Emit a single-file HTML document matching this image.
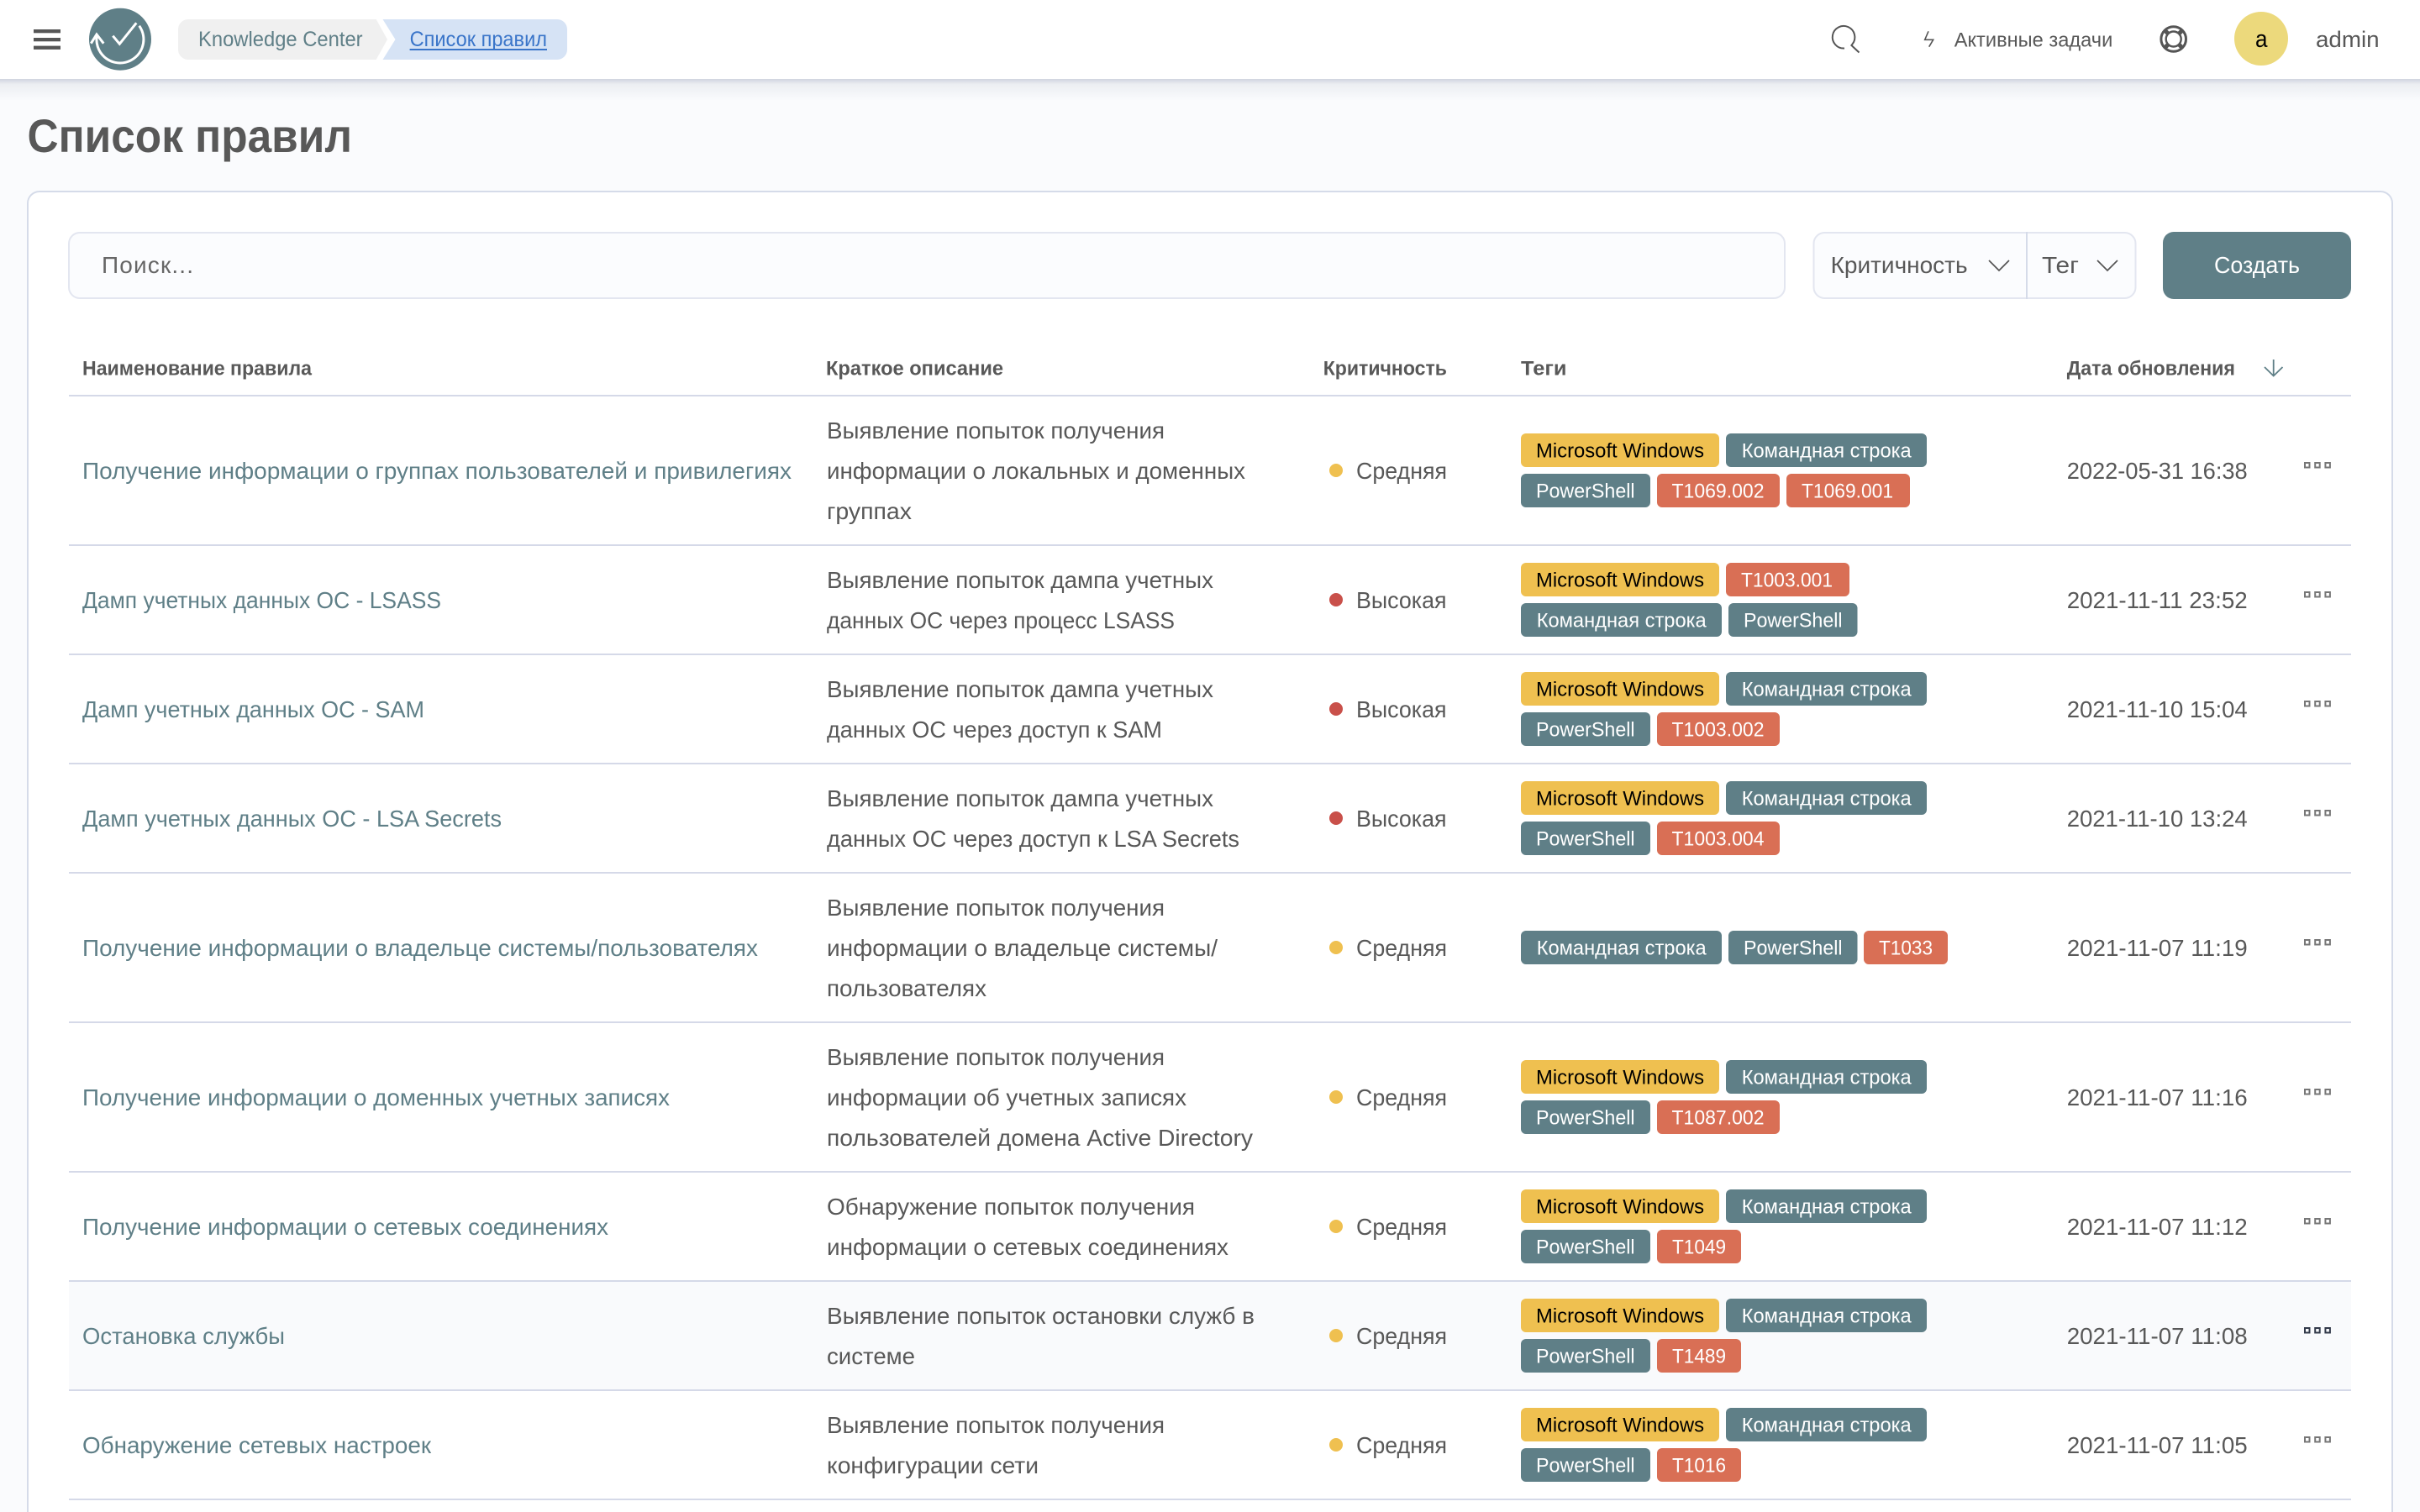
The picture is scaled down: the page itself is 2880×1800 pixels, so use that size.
<!DOCTYPE html>
<html lang="ru"><head><meta charset="utf-8"><title>Список правил</title>
<style>
html,body{margin:0;padding:0;background:#fafbfd;width:2880px;height:1800px;overflow:hidden}
svg{display:block}
text{font-family:"Liberation Sans",sans-serif;fill:#585858;font-size:28px}
.n{fill:#5f7f87}
.h{font-size:24px;font-weight:bold}
.w{fill:#fff;font-size:24px}
.k{fill:#000;font-size:24px}
.y{fill:#efc050}.t{fill:#5f7f87}.r{fill:#d96f55}
.q{fill:none;stroke:#777;stroke-width:2}
.l{fill:none;stroke:#555;stroke-width:1.7}
</style></head><body>
<svg width="2880" height="1800" viewBox="0 0 2880 1800" xmlns="http://www.w3.org/2000/svg">
<defs><linearGradient id="sh" x1="0" y1="0" x2="0" y2="1"><stop offset="0" stop-color="#d0d4e0"/><stop offset=".25" stop-color="#eceef2"/><stop offset="1" stop-color="#fafbfd"/></linearGradient></defs>
<rect width="2880" height="1800" fill="#fafbfd"/>
<rect y="94" width="2880" height="26" fill="url(#sh)"/>
<rect width="2880" height="94" fill="#fff"/>
<!-- hamburger -->
<rect x="40" y="35" width="32" height="4.3" fill="#555"/><rect x="40" y="45" width="32" height="4.3" fill="#555"/><rect x="40" y="54.6" width="32" height="4.3" fill="#555"/>
<!-- logo -->
<circle cx="143" cy="46.7" r="37" fill="#5f7f87"/>
<path d="M165.7 30.7A28 28 0 1 1 115.2 43M108.3 51.7L115 41L123.3 51.7M134.3 42.7L142.3 52.3L162.3 27.3" fill="none" stroke="#fff" stroke-width="3"/>
<!-- breadcrumb -->
<path d="M224 23H447.7L461 47L447.7 71H224A12 12 0 0 1 212 59V35A12 12 0 0 1 224 23Z" fill="#f0f0f0"/>
<path d="M455.5 23H663A12 12 0 0 1 675 35V59A12 12 0 0 1 663 71H455.5L470.5 47Z" fill="#d6e3f5"/>
<text x="236" y="55" style="font-size:25px;fill:#5f7f87" textLength="195.6" lengthAdjust="spacingAndGlyphs">Knowledge Center</text>
<text x="487.6" y="55" style="font-size:25px;fill:#3a75c9" textLength="163.4" lengthAdjust="spacingAndGlyphs">Список правил</text>
<rect x="487.6" y="58" width="163.4" height="2" fill="#3a75c9"/>
<!-- right header -->
<path d="M2195 57.5A13.3 13.3 0 1 1 2204.5 52.5L2203.4 54L2212.5 62.5" fill="none" stroke="#555" stroke-width="2"/>
<path d="M2295 37.3L2290.7 47.3H2300.7L2295.7 55.7" fill="none" stroke="#555" stroke-width="1.6"/>
<text x="2325.7" y="55.5" style="font-size:24px" textLength="188.6" lengthAdjust="spacingAndGlyphs">Активные задачи</text>
<circle cx="2586.7" cy="46.5" r="14.8" fill="none" stroke="#555" stroke-width="3"/><circle cx="2586.7" cy="46.5" r="9" fill="none" stroke="#555" stroke-width="2.4"/>
<path d="M2576.5 36.3L2580.3 40.1M2596.9 36.3L2593.1 40.1M2576.5 56.7L2580.3 52.9M2596.9 56.7L2593.1 52.9" fill="none" stroke="#555" stroke-width="5"/>
<circle cx="2691" cy="46" r="32" fill="#ecd97c"/>
<text x="2684" y="56" style="fill:#000;font-size:29px" textLength="14.5" lengthAdjust="spacingAndGlyphs">a</text>
<text x="2756" y="56" style="font-size:27px" textLength="75.6" lengthAdjust="spacingAndGlyphs">admin</text>
<!-- title -->
<text x="32.5" y="181" style="font-size:56px;font-weight:bold" textLength="386.5" lengthAdjust="spacingAndGlyphs">Список правил</text>
<!-- card -->
<rect x="33" y="228" width="2814" height="1640" rx="14" fill="#fff" stroke="#d5dbe9" stroke-width="2"/>
<!-- toolbar -->
<rect x="82" y="277" width="2042" height="78" rx="13" fill="#fbfcfe" stroke="#e3e6f0" stroke-width="2"/>
<text x="121" y="325" style="fill:#666" textLength="109" lengthAdjust="spacing">Поиск...</text>
<rect x="2158.5" y="277" width="383" height="78" rx="13" fill="#fbfcfe" stroke="#e3e6f0" stroke-width="2"/>
<rect x="2411" y="276" width="2" height="80" fill="#d5dbe9"/>
<text x="2178.6" y="325" textLength="163" lengthAdjust="spacingAndGlyphs">Критичность</text>
<path d="M2367 310L2379 322L2391 310" class="l"/>
<text x="2430" y="325" textLength="44" lengthAdjust="spacingAndGlyphs">Тег</text>
<path d="M2496 310L2508 322L2520 310" class="l"/>
<rect x="2574" y="276" width="224" height="80" rx="13" fill="#5f7f87"/>
<text x="2635" y="325" style="fill:#fff" textLength="102" lengthAdjust="spacingAndGlyphs">Создать</text>
<!-- table head -->
<text class="h" x="98" y="446.7" textLength="273" lengthAdjust="spacingAndGlyphs">Наименование правила</text>
<text class="h" x="983" y="446.7" textLength="211" lengthAdjust="spacingAndGlyphs">Краткое описание</text>
<text class="h" x="1574.7" y="446.7" textLength="147.3" lengthAdjust="spacingAndGlyphs">Критичность</text>
<text class="h" x="1810" y="446.7" textLength="54.5" lengthAdjust="spacingAndGlyphs">Теги</text>
<text class="h" x="2459.7" y="446.7" textLength="200.3" lengthAdjust="spacingAndGlyphs">Дата обновления</text>
<path d="M2705.7 428V447M2695 437L2705.7 447.5L2716.5 437" fill="none" stroke="#5f7f87" stroke-width="1.8"/>
<!-- hover row -->
<rect x="82" y="1525" width="2716" height="130" fill="#f9fafc"/>
<!-- lines -->
<g fill="#d5d9e8"><rect x="82" y="470" width="2716" height="2"/><rect x="82" y="648" width="2716" height="2"/><rect x="82" y="778" width="2716" height="2"/><rect x="82" y="908" width="2716" height="2"/><rect x="82" y="1038" width="2716" height="2"/><rect x="82" y="1216" width="2716" height="2"/><rect x="82" y="1394" width="2716" height="2"/><rect x="82" y="1524" width="2716" height="2"/><rect x="82" y="1654" width="2716" height="2"/><rect x="82" y="1784" width="2716" height="2"/></g>

<!-- row 1 -->
<g transform="translate(0,560)">
<text class="n" x="98" y="10" textLength="844" lengthAdjust="spacingAndGlyphs">Получение информации о группах пользователей и привилегиях</text>
<text x="984" y="-38" textLength="402" lengthAdjust="spacingAndGlyphs">Выявление попыток получения</text>
<text x="984" y="10" textLength="498" lengthAdjust="spacingAndGlyphs">информации о локальных и доменных</text>
<text x="984" y="58" textLength="101" lengthAdjust="spacingAndGlyphs">группах</text>
<circle cx="1590" cy="0" r="8" fill="#efc050"/><text x="1614" y="10" textLength="108" lengthAdjust="spacingAndGlyphs">Средняя</text>
<rect class="y" x="1810" y="-44" width="236" height="40" rx="6"/><text class="k" x="1828" y="-15.3" textLength="200" lengthAdjust="spacingAndGlyphs">Microsoft Windows</text>
<rect class="t" x="2054" y="-44" width="239" height="40" rx="6"/><text class="w" x="2072.7" y="-15.3" textLength="202" lengthAdjust="spacingAndGlyphs">Командная строка</text>
<rect class="t" x="1810" y="4" width="154" height="40" rx="6"/><text class="w" x="1828" y="32.7" textLength="117.6" lengthAdjust="spacingAndGlyphs">PowerShell</text>
<rect class="r" x="1972" y="4" width="146" height="40" rx="6"/><text class="w" x="1989.5" y="32.7" textLength="110" lengthAdjust="spacingAndGlyphs">T1069.002</text>
<rect class="r" x="2126" y="4" width="147" height="40" rx="6"/><text class="w" x="2144" y="32.7" textLength="109" lengthAdjust="spacingAndGlyphs">T1069.001</text>
<text x="2459.7" y="10" textLength="215" lengthAdjust="spacingAndGlyphs">2022-05-31 16:38</text>
<rect class="q" x="2743" y="-9" width="5.5" height="5.5"/><rect class="q" x="2755.2" y="-9" width="5.5" height="5.5"/><rect class="q" x="2767.4" y="-9" width="5.5" height="5.5"/>
</g>

<!-- row 2 -->
<g transform="translate(0,714)">
<text class="n" x="98" y="10" textLength="427" lengthAdjust="spacingAndGlyphs">Дамп учетных данных ОС - LSASS</text>
<text x="984" y="-14" textLength="460" lengthAdjust="spacingAndGlyphs">Выявление попыток дампа учетных</text>
<text x="984" y="34" textLength="414" lengthAdjust="spacingAndGlyphs">данных ОС через процесс LSASS</text>
<circle cx="1590" cy="0" r="8" fill="#c9504a"/><text x="1614" y="10" textLength="107.5" lengthAdjust="spacingAndGlyphs">Высокая</text>
<rect class="y" x="1810" y="-44" width="236" height="40" rx="6"/><text class="k" x="1828" y="-15.3" textLength="200" lengthAdjust="spacingAndGlyphs">Microsoft Windows</text>
<rect class="r" x="2054" y="-44" width="147" height="40" rx="6"/><text class="w" x="2072" y="-15.3" textLength="109" lengthAdjust="spacingAndGlyphs">T1003.001</text>
<rect class="t" x="1810" y="4" width="239" height="40" rx="6"/><text class="w" x="1828.7" y="32.7" textLength="202" lengthAdjust="spacingAndGlyphs">Командная строка</text>
<rect class="t" x="2057" y="4" width="153.5" height="40" rx="6"/><text class="w" x="2075" y="32.7" textLength="117.6" lengthAdjust="spacingAndGlyphs">PowerShell</text>
<text x="2459.7" y="10" textLength="215" lengthAdjust="spacingAndGlyphs">2021-11-11 23:52</text>
<rect class="q" x="2743" y="-9" width="5.5" height="5.5"/><rect class="q" x="2755.2" y="-9" width="5.5" height="5.5"/><rect class="q" x="2767.4" y="-9" width="5.5" height="5.5"/>
</g>

<!-- row 3 -->
<g transform="translate(0,844)">
<text class="n" x="98" y="10" textLength="407" lengthAdjust="spacingAndGlyphs">Дамп учетных данных ОС - SAM</text>
<text x="984" y="-14" textLength="460" lengthAdjust="spacingAndGlyphs">Выявление попыток дампа учетных</text>
<text x="984" y="34" textLength="399" lengthAdjust="spacingAndGlyphs">данных ОС через доступ к SAM</text>
<circle cx="1590" cy="0" r="8" fill="#c9504a"/><text x="1614" y="10" textLength="107.5" lengthAdjust="spacingAndGlyphs">Высокая</text>
<rect class="y" x="1810" y="-44" width="236" height="40" rx="6"/><text class="k" x="1828" y="-15.3" textLength="200" lengthAdjust="spacingAndGlyphs">Microsoft Windows</text>
<rect class="t" x="2054" y="-44" width="239" height="40" rx="6"/><text class="w" x="2072.7" y="-15.3" textLength="202" lengthAdjust="spacingAndGlyphs">Командная строка</text>
<rect class="t" x="1810" y="4" width="154" height="40" rx="6"/><text class="w" x="1828" y="32.7" textLength="117.6" lengthAdjust="spacingAndGlyphs">PowerShell</text>
<rect class="r" x="1972" y="4" width="146" height="40" rx="6"/><text class="w" x="1989.5" y="32.7" textLength="110" lengthAdjust="spacingAndGlyphs">T1003.002</text>
<text x="2459.7" y="10" textLength="215" lengthAdjust="spacingAndGlyphs">2021-11-10 15:04</text>
<rect class="q" x="2743" y="-9" width="5.5" height="5.5"/><rect class="q" x="2755.2" y="-9" width="5.5" height="5.5"/><rect class="q" x="2767.4" y="-9" width="5.5" height="5.5"/>
</g>

<!-- row 4 -->
<g transform="translate(0,974)">
<text class="n" x="98" y="10" textLength="499" lengthAdjust="spacingAndGlyphs">Дамп учетных данных ОС - LSA Secrets</text>
<text x="984" y="-14" textLength="460" lengthAdjust="spacingAndGlyphs">Выявление попыток дампа учетных</text>
<text x="984" y="34" textLength="491" lengthAdjust="spacingAndGlyphs">данных ОС через доступ к LSA Secrets</text>
<circle cx="1590" cy="0" r="8" fill="#c9504a"/><text x="1614" y="10" textLength="107.5" lengthAdjust="spacingAndGlyphs">Высокая</text>
<rect class="y" x="1810" y="-44" width="236" height="40" rx="6"/><text class="k" x="1828" y="-15.3" textLength="200" lengthAdjust="spacingAndGlyphs">Microsoft Windows</text>
<rect class="t" x="2054" y="-44" width="239" height="40" rx="6"/><text class="w" x="2072.7" y="-15.3" textLength="202" lengthAdjust="spacingAndGlyphs">Командная строка</text>
<rect class="t" x="1810" y="4" width="154" height="40" rx="6"/><text class="w" x="1828" y="32.7" textLength="117.6" lengthAdjust="spacingAndGlyphs">PowerShell</text>
<rect class="r" x="1972" y="4" width="146" height="40" rx="6"/><text class="w" x="1989.5" y="32.7" textLength="110" lengthAdjust="spacingAndGlyphs">T1003.004</text>
<text x="2459.7" y="10" textLength="215" lengthAdjust="spacingAndGlyphs">2021-11-10 13:24</text>
<rect class="q" x="2743" y="-9" width="5.5" height="5.5"/><rect class="q" x="2755.2" y="-9" width="5.5" height="5.5"/><rect class="q" x="2767.4" y="-9" width="5.5" height="5.5"/>
</g>

<!-- row 5 -->
<g transform="translate(0,1128)">
<text class="n" x="98" y="10" textLength="804" lengthAdjust="spacingAndGlyphs">Получение информации о владельце системы/пользователях</text>
<text x="984" y="-38" textLength="402" lengthAdjust="spacingAndGlyphs">Выявление попыток получения</text>
<text x="984" y="10" textLength="465" lengthAdjust="spacingAndGlyphs">информации о владельце системы/</text>
<text x="984" y="58" textLength="190" lengthAdjust="spacingAndGlyphs">пользователях</text>
<circle cx="1590" cy="0" r="8" fill="#efc050"/><text x="1614" y="10" textLength="108" lengthAdjust="spacingAndGlyphs">Средняя</text>
<rect class="t" x="1810" y="-20" width="239" height="40" rx="6"/><text class="w" x="1828.7" y="8.7" textLength="202" lengthAdjust="spacingAndGlyphs">Командная строка</text>
<rect class="t" x="2057" y="-20" width="153.5" height="40" rx="6"/><text class="w" x="2075" y="8.7" textLength="117.6" lengthAdjust="spacingAndGlyphs">PowerShell</text>
<rect class="r" x="2218" y="-20" width="100" height="40" rx="6"/><text class="w" x="2236" y="8.7" textLength="64" lengthAdjust="spacingAndGlyphs">T1033</text>
<text x="2459.7" y="10" textLength="215" lengthAdjust="spacingAndGlyphs">2021-11-07 11:19</text>
<rect class="q" x="2743" y="-9" width="5.5" height="5.5"/><rect class="q" x="2755.2" y="-9" width="5.5" height="5.5"/><rect class="q" x="2767.4" y="-9" width="5.5" height="5.5"/>
</g>

<!-- row 6 -->
<g transform="translate(0,1306)">
<text class="n" x="98" y="10" textLength="699" lengthAdjust="spacingAndGlyphs">Получение информации о доменных учетных записях</text>
<text x="984" y="-38" textLength="402" lengthAdjust="spacingAndGlyphs">Выявление попыток получения</text>
<text x="984" y="10" textLength="428" lengthAdjust="spacingAndGlyphs">информации об учетных записях</text>
<text x="984" y="58" textLength="507" lengthAdjust="spacingAndGlyphs">пользователей домена Active Directory</text>
<circle cx="1590" cy="0" r="8" fill="#efc050"/><text x="1614" y="10" textLength="108" lengthAdjust="spacingAndGlyphs">Средняя</text>
<rect class="y" x="1810" y="-44" width="236" height="40" rx="6"/><text class="k" x="1828" y="-15.3" textLength="200" lengthAdjust="spacingAndGlyphs">Microsoft Windows</text>
<rect class="t" x="2054" y="-44" width="239" height="40" rx="6"/><text class="w" x="2072.7" y="-15.3" textLength="202" lengthAdjust="spacingAndGlyphs">Командная строка</text>
<rect class="t" x="1810" y="4" width="154" height="40" rx="6"/><text class="w" x="1828" y="32.7" textLength="117.6" lengthAdjust="spacingAndGlyphs">PowerShell</text>
<rect class="r" x="1972" y="4" width="146" height="40" rx="6"/><text class="w" x="1989.5" y="32.7" textLength="110" lengthAdjust="spacingAndGlyphs">T1087.002</text>
<text x="2459.7" y="10" textLength="215" lengthAdjust="spacingAndGlyphs">2021-11-07 11:16</text>
<rect class="q" x="2743" y="-9" width="5.5" height="5.5"/><rect class="q" x="2755.2" y="-9" width="5.5" height="5.5"/><rect class="q" x="2767.4" y="-9" width="5.5" height="5.5"/>
</g>

<!-- row 7 -->
<g transform="translate(0,1460)">
<text class="n" x="98" y="10" textLength="626" lengthAdjust="spacingAndGlyphs">Получение информации о сетевых соединениях</text>
<text x="984" y="-14" textLength="438" lengthAdjust="spacingAndGlyphs">Обнаружение попыток получения</text>
<text x="984" y="34" textLength="478" lengthAdjust="spacingAndGlyphs">информации о сетевых соединениях</text>
<circle cx="1590" cy="0" r="8" fill="#efc050"/><text x="1614" y="10" textLength="108" lengthAdjust="spacingAndGlyphs">Средняя</text>
<rect class="y" x="1810" y="-44" width="236" height="40" rx="6"/><text class="k" x="1828" y="-15.3" textLength="200" lengthAdjust="spacingAndGlyphs">Microsoft Windows</text>
<rect class="t" x="2054" y="-44" width="239" height="40" rx="6"/><text class="w" x="2072.7" y="-15.3" textLength="202" lengthAdjust="spacingAndGlyphs">Командная строка</text>
<rect class="t" x="1810" y="4" width="154" height="40" rx="6"/><text class="w" x="1828" y="32.7" textLength="117.6" lengthAdjust="spacingAndGlyphs">PowerShell</text>
<rect class="r" x="1972" y="4" width="100" height="40" rx="6"/><text class="w" x="1990" y="32.7" textLength="64" lengthAdjust="spacingAndGlyphs">T1049</text>
<text x="2459.7" y="10" textLength="215" lengthAdjust="spacingAndGlyphs">2021-11-07 11:12</text>
<rect class="q" x="2743" y="-9" width="5.5" height="5.5"/><rect class="q" x="2755.2" y="-9" width="5.5" height="5.5"/><rect class="q" x="2767.4" y="-9" width="5.5" height="5.5"/>
</g>

<!-- row 8 (hover) -->
<g transform="translate(0,1590)">
<text class="n" x="98" y="10" textLength="241" lengthAdjust="spacingAndGlyphs">Остановка службы</text>
<text x="984" y="-14" textLength="509" lengthAdjust="spacingAndGlyphs">Выявление попыток остановки служб в</text>
<text x="984" y="34" textLength="105" lengthAdjust="spacingAndGlyphs">системе</text>
<circle cx="1590" cy="0" r="8" fill="#efc050"/><text x="1614" y="10" textLength="108" lengthAdjust="spacingAndGlyphs">Средняя</text>
<rect class="y" x="1810" y="-44" width="236" height="40" rx="6"/><text class="k" x="1828" y="-15.3" textLength="200" lengthAdjust="spacingAndGlyphs">Microsoft Windows</text>
<rect class="t" x="2054" y="-44" width="239" height="40" rx="6"/><text class="w" x="2072.7" y="-15.3" textLength="202" lengthAdjust="spacingAndGlyphs">Командная строка</text>
<rect class="t" x="1810" y="4" width="154" height="40" rx="6"/><text class="w" x="1828" y="32.7" textLength="117.6" lengthAdjust="spacingAndGlyphs">PowerShell</text>
<rect class="r" x="1972" y="4" width="100" height="40" rx="6"/><text class="w" x="1990" y="32.7" textLength="64" lengthAdjust="spacingAndGlyphs">T1489</text>
<text x="2459.7" y="10" textLength="215" lengthAdjust="spacingAndGlyphs">2021-11-07 11:08</text>
<rect class="q" style="stroke:#333a4a" x="2743" y="-9" width="5.5" height="5.5"/><rect class="q" style="stroke:#333a4a" x="2755.2" y="-9" width="5.5" height="5.5"/><rect class="q" style="stroke:#333a4a" x="2767.4" y="-9" width="5.5" height="5.5"/>
</g>

<!-- row 9 -->
<g transform="translate(0,1720)">
<text class="n" x="98" y="10" textLength="415" lengthAdjust="spacingAndGlyphs">Обнаружение сетевых настроек</text>
<text x="984" y="-14" textLength="402" lengthAdjust="spacingAndGlyphs">Выявление попыток получения</text>
<text x="984" y="34" textLength="252" lengthAdjust="spacingAndGlyphs">конфигурации сети</text>
<circle cx="1590" cy="0" r="8" fill="#efc050"/><text x="1614" y="10" textLength="108" lengthAdjust="spacingAndGlyphs">Средняя</text>
<rect class="y" x="1810" y="-44" width="236" height="40" rx="6"/><text class="k" x="1828" y="-15.3" textLength="200" lengthAdjust="spacingAndGlyphs">Microsoft Windows</text>
<rect class="t" x="2054" y="-44" width="239" height="40" rx="6"/><text class="w" x="2072.7" y="-15.3" textLength="202" lengthAdjust="spacingAndGlyphs">Командная строка</text>
<rect class="t" x="1810" y="4" width="154" height="40" rx="6"/><text class="w" x="1828" y="32.7" textLength="117.6" lengthAdjust="spacingAndGlyphs">PowerShell</text>
<rect class="r" x="1972" y="4" width="100" height="40" rx="6"/><text class="w" x="1990" y="32.7" textLength="64" lengthAdjust="spacingAndGlyphs">T1016</text>
<text x="2459.7" y="10" textLength="215" lengthAdjust="spacingAndGlyphs">2021-11-07 11:05</text>
<rect class="q" x="2743" y="-9" width="5.5" height="5.5"/><rect class="q" x="2755.2" y="-9" width="5.5" height="5.5"/><rect class="q" x="2767.4" y="-9" width="5.5" height="5.5"/>
</g>
</svg>
</body></html>
